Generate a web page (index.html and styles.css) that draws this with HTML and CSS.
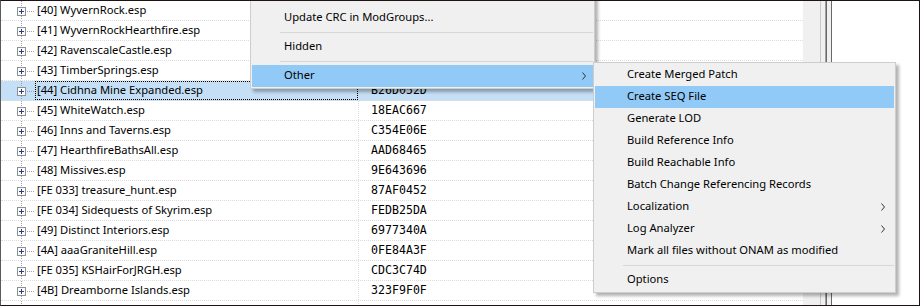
FILE: index.html
```html
<!DOCTYPE html>
<html lang="en">
<head>
    <meta charset="UTF-8" />
    <meta name="viewport" content="width=device-width, initial-scale=1.0" />
    <title>Mod Groups</title>
    <link rel="stylesheet" href="styles.css">
</head>
<body>
    <svg width="0" height="0" class="defs">
        <symbol id="expander" viewBox="0 0 34 19">
            <line x1="20.5" y1="0" x2="20.5" y2="6" stroke="#a0a0a0" stroke-dasharray="1 1" />
            <line x1="20.5" y1="15" x2="20.5" y2="19" stroke="#a0a0a0" stroke-dasharray="1 1" />
            <line x1="26" y1="10.5" x2="34" y2="10.5" stroke="#a0a0a0" stroke-dasharray="1 1" />
            <rect x="16.5" y="6.5" width="8" height="8" fill="#fbfbfb" stroke="#8f8f8f" />
            <line x1="18" y1="10.5" x2="23" y2="10.5" stroke="#23418a" />
            <line x1="20.5" y1="8" x2="20.5" y2="13" stroke="#23418a" />
        </symbol>
        <symbol id="chevron" viewBox="0 0 5 8">
            <polyline points="0.5,0.5 3.5,4 0.5,7.5" fill="none" stroke="#333" />
        </symbol>
    </svg>

    <div class="window">
        <div class="tree">
            <!-- CRC cells of the first rows sit under the popup menu -->
            <div class="row"><div class="name"><svg class="exp"><use href="#expander"/></svg><span class="label">[40] WyvernRock.esp</span></div><div class="crc"></div></div>
            <div class="row"><div class="name"><svg class="exp"><use href="#expander"/></svg><span class="label">[41] WyvernRockHearthfire.esp</span></div><div class="crc"></div></div>
            <div class="row"><div class="name"><svg class="exp"><use href="#expander"/></svg><span class="label">[42] RavenscaleCastle.esp</span></div><div class="crc"></div></div>
            <div class="row"><div class="name"><svg class="exp"><use href="#expander"/></svg><span class="label">[43] TimberSprings.esp</span></div><div class="crc"></div></div>
            <div class="row sel"><div class="name"><svg class="exp"><use href="#expander"/></svg><span class="label">[44] Cidhna Mine Expanded.esp</span></div><div class="crc">B26D052D</div></div>
            <div class="row"><div class="name"><svg class="exp"><use href="#expander"/></svg><span class="label">[45] WhiteWatch.esp</span></div><div class="crc">18EAC667</div></div>
            <div class="row"><div class="name"><svg class="exp"><use href="#expander"/></svg><span class="label">[46] Inns and Taverns.esp</span></div><div class="crc">C354E06E</div></div>
            <div class="row"><div class="name"><svg class="exp"><use href="#expander"/></svg><span class="label">[47] HearthfireBathsAll.esp</span></div><div class="crc">AAD68465</div></div>
            <div class="row"><div class="name"><svg class="exp"><use href="#expander"/></svg><span class="label">[48] Missives.esp</span></div><div class="crc">9E643696</div></div>
            <div class="row"><div class="name"><svg class="exp"><use href="#expander"/></svg><span class="label">[FE 033] treasure_hunt.esp</span></div><div class="crc">87AF0452</div></div>
            <div class="row"><div class="name"><svg class="exp"><use href="#expander"/></svg><span class="label">[FE 034] Sidequests of Skyrim.esp</span></div><div class="crc">FEDB25DA</div></div>
            <div class="row"><div class="name"><svg class="exp"><use href="#expander"/></svg><span class="label">[49] Distinct Interiors.esp</span></div><div class="crc">6977340A</div></div>
            <div class="row"><div class="name"><svg class="exp"><use href="#expander"/></svg><span class="label">[4A] aaaGraniteHill.esp</span></div><div class="crc">0FE84A3F</div></div>
            <div class="row"><div class="name"><svg class="exp"><use href="#expander"/></svg><span class="label">[FE 035] KSHairForJRGH.esp</span></div><div class="crc">CDC3C74D</div></div>
            <div class="row"><div class="name"><svg class="exp"><use href="#expander"/></svg><span class="label">[4B] Dreamborne Islands.esp</span></div><div class="crc">323F9F0F</div></div>
            <div class="row"><div class="name"><svg class="exp"><use href="#expander"/></svg><span class="label"></span></div><div class="crc"></div></div>
        </div>
        <div class="scroll"></div>
        <div class="splitter"></div>
        <div class="side"></div>

        <!-- popup menu with the "Other" submenu open -->
        <div class="menu menu-main">
            <div class="item"><span class="text"></span></div>
            <div class="item"><span class="text">Update CRC in ModGroups...</span></div>
            <div class="sep"></div>
            <div class="item"><span class="text">Hidden</span></div>
            <div class="sep"></div>
            <div class="item hot"><span class="text">Other</span><svg class="chev"><use href="#chevron"/></svg></div>
        </div>

        <div class="menu menu-sub">
            <div class="item"><span class="text">Create Merged Patch</span></div>
            <div class="item hot"><span class="text">Create SEQ File</span></div>
            <div class="item"><span class="text">Generate LOD</span></div>
            <div class="item"><span class="text">Build Reference Info</span></div>
            <div class="item"><span class="text">Build Reachable Info</span></div>
            <div class="item"><span class="text">Batch Change Referencing Records</span></div>
            <div class="item"><span class="text">Localization</span><svg class="chev"><use href="#chevron"/></svg></div>
            <div class="item"><span class="text">Log Analyzer</span><svg class="chev"><use href="#chevron"/></svg></div>
            <div class="item"><span class="text">Mark all files without ONAM as modified</span></div>
            <div class="sep"></div>
            <div class="item"><span class="text">Options</span></div>
        </div>
    </div>
</body>
</html>
```

FILE: styles.css
```css
/* General styles */
body {
    margin: 0;
    font-family: "Noto Sans", "DejaVu Sans", sans-serif;
    font-size: 11.2px;
    color: #000;
    background: #fff;
}

.defs {
    position: absolute;
}

.window {
    position: relative;
    display: flex;
    width: 920px;
    height: 306px;
    box-sizing: border-box;
    border: 1px solid #1e1212;
    border-left-color: #5a5a5a;
    overflow: hidden;
    background: #fff;
}

/* tree view */
.tree {
    width: 802px;
    flex: none;
}

.row {
    display: flex;
    height: 20px;
    box-sizing: border-box;
    border-bottom: 1px dotted #dcdcdc;
}

.row.sel {
    background: #c4dff6;
}

.name {
    display: flex;
    align-items: stretch;
    width: 358px;
    flex: none;
    box-sizing: border-box;
    border-right: 1px dotted #dcdcdc;
}

.exp {
    width: 34px;
    height: 19px;
    flex: none;
}

.label {
    flex: 1;
    display: flex;
    align-items: center;
    box-sizing: border-box;
    padding: 0 0 3px 2px;
    white-space: nowrap;
}

.row.sel .label {
    outline: 1px dotted #000;
    outline-offset: -1px;
}

.crc {
    display: flex;
    align-items: center;
    box-sizing: border-box;
    padding: 0 0 1px 12px;
    font-family: "DejaVu Sans Mono", monospace;
    font-size: 11.6px;
}

.scroll {
    width: 17px;
    flex: none;
    background: #f0f0f0;
}

.splitter {
    width: 12px;
    flex: none;
    background: linear-gradient(to right,
        #c8c8c8 0 1px, #f0f0f0 1px 5px, #a0a0a0 5px 6px, #696969 6px 7px,
        #f0f0f0 7px 11px, #696969 11px 12px);
}

.side {
    flex: 1;
    background: #fff;
}

/* popup menus */
.menu {
    position: absolute;
    box-sizing: border-box;
    padding: 1px;
    background: #f0f0f0;
    border: 1px solid #cdcdcd;
    box-shadow: 3px 3px 3px rgba(0, 0, 0, 0.3);
}

.menu-main {
    left: 249px;
    top: -18px;
    width: 345px;
}

.menu-sub {
    left: 592px;
    top: 61px;
    width: 303px;
}

.item {
    display: flex;
    align-items: center;
    height: 22px;
    box-sizing: border-box;
    padding: 0 8px 3px 32px;
    white-space: nowrap;
}

.menu-main .item {
    padding-right: 6px;
}

.item.hot {
    background: #91c9f7;
}

.item .text {
    flex: 1;
}

.chev {
    width: 5px;
    height: 8px;
    margin-top: 3px;
}

.sep {
    height: 1px;
    margin: 3px 0 3px 28px;
    background: #d7d7d7;
}
```
